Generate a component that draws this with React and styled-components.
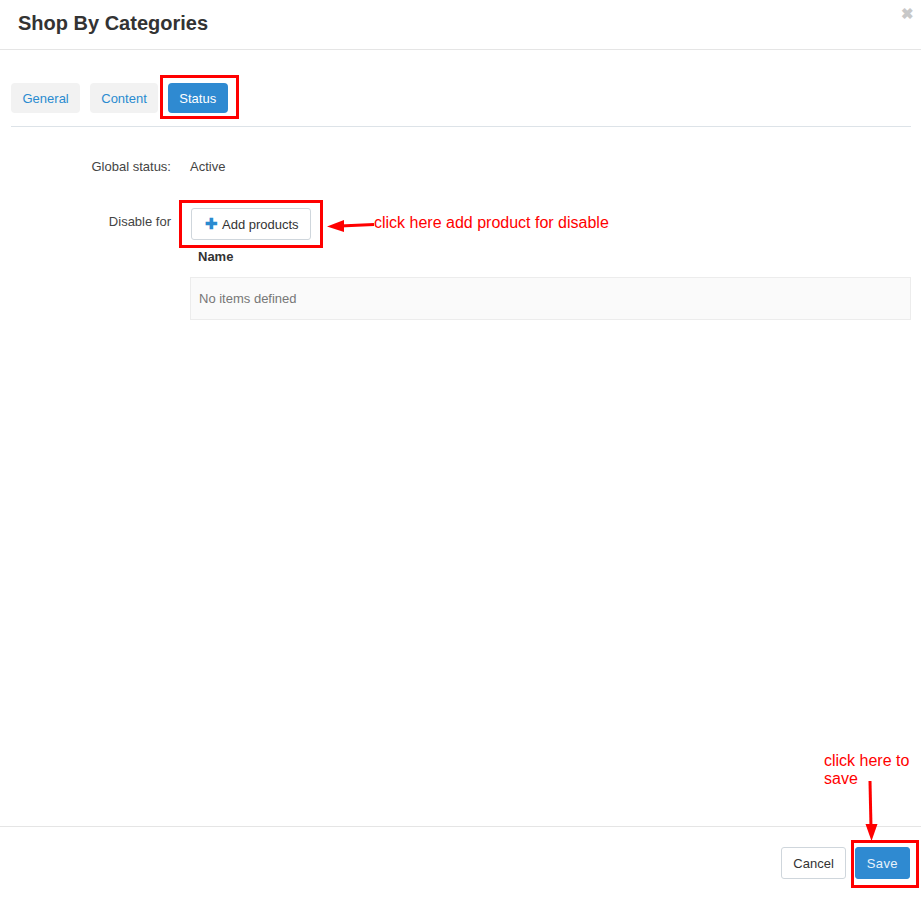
import React from 'react';
import styled, { createGlobalStyle } from 'styled-components';

const GlobalStyle = createGlobalStyle`
  html, body {
    margin: 0;
    padding: 0;
    background: #fff;
  }
  body {
    font-family: "Liberation Sans", Arial, sans-serif;
    font-size: 13px;
    color: #333;
  }
  * {
    box-sizing: border-box;
  }
`;

const Modal = styled.div`
  position: relative;
  width: 921px;
  height: 898px;
  display: flex;
  flex-direction: column;
  background: #fff;
`;

const Header = styled.div`
  height: 50px;
  border-bottom: 1px solid #e5e5e5;
  display: flex;
  align-items: center;
  padding: 0 18px;
`;

const Title = styled.h1`
  margin: 0;
  font-size: 20px;
  font-weight: bold;
  color: #333;
  margin-top: -2px;
`;

const Close = styled.span`
  position: absolute;
  top: 5px;
  right: 7px;
  font-size: 15px;
  color: #c8c8c8;
  font-weight: bold;
  cursor: pointer;
`;

const Body = styled.div`
  flex: 1;
  padding: 33px 10px 0 11px;
`;

const Tabs = styled.div`
  display: flex;
  gap: 9.5px;
  padding-bottom: 13px;
  border-bottom: 1px solid #dde3e8;
`;

const Tab = styled.button`
  height: 30px;
  padding: 0 11.5px;
  border: none;
  border-radius: 4px;
  font-family: inherit;
  font-size: 13px;
  background: ${p => (p.active ? '#2f8ad1' : '#f2f2f2')};
  color: ${p => (p.active ? '#fff' : '#2a8bd0')};
  cursor: pointer;
`;

const Form = styled.div`
  padding-top: 26px;
  display: flex;
  flex-direction: column;
  gap: 27px;
`;

const Row = styled.div`
  display: grid;
  grid-template-columns: 160px 1fr;
  column-gap: 19px;
`;

const Label = styled.div`
  text-align: right;
  color: #444;
  line-height: 28px;
`;

const Value = styled.div`
  color: #444;
  line-height: 28px;
`;

const AddButton = styled.button`
  display: inline-flex;
  align-items: center;
  gap: 4px;
  height: 32px;
  margin-left: 1px;
  padding: 0 11px 0 13px;
  background: #fff;
  border: 1px solid #cfd6dc;
  border-radius: 3px;
  font-family: inherit;
  font-size: 13px;
  color: #333;
  cursor: pointer;
`;

const Plus = styled.span`
  color: #2a8bd0;
  font-weight: bold;
  font-size: 15px;
  line-height: 1;
  margin-top: -2px;
`;

const Table = styled.div`
  margin-top: 5px;
`;

const HeadCell = styled.div`
  font-weight: bold;
  color: #333;
  padding: 0 8px;
  height: 32px;
  line-height: 24px;
`;

const EmptyRow = styled.div`
  height: 43px;
  background: #fafafa;
  border: 1px solid #ececec;
  display: flex;
  align-items: center;
  padding: 0 8px;
  color: #777;
  font-size: 13px;
`;

const Footer = styled.div`
  height: 72px;
  border-top: 1px solid #e5e5e5;
  display: flex;
  justify-content: flex-end;
  align-items: flex-start;
  gap: 9px;
  padding: 20px 11px 0 0;
`;

const FooterButton = styled.button`
  height: 32px;
  padding: 0 11px;
  border-radius: 3px;
  font-family: inherit;
  font-size: 13px;
  border: 1px solid ${p => (p.primary ? '#2f8ad1' : '#cfd6dc')};
  background: ${p => (p.primary ? '#2f8ad1' : '#fff')};
  color: ${p => (p.primary ? '#e8f2fb' : '#333')};
  letter-spacing: ${p => (p.primary ? '0.4px' : '0')};
  cursor: pointer;
`;

const Mark = styled.div`
  position: absolute;
  border: 3px solid #ff0000;
`;

const Note = styled.div`
  position: absolute;
  color: #ff0000;
  font-size: 16px;
  line-height: 18px;
  font-family: "Liberation Sans", Arial, sans-serif;
`;

const Arrows = styled.svg`
  position: absolute;
  left: 0;
  top: 0;
  pointer-events: none;
`;

export default function App() {
  return (
    <>
      <GlobalStyle />
      <Modal>
        <Header>
          <Title>Shop By Categories</Title>
        </Header>
        <Close>✖</Close>
        <Body>
          <Tabs>
            <Tab>General</Tab>
            <Tab>Content</Tab>
            <Tab active>Status</Tab>
          </Tabs>
          <Form>
            <Row>
              <Label>Global status:</Label>
              <Value>Active</Value>
            </Row>
            <Row>
              <Label>Disable for</Label>
              <div>
                <AddButton>
                  <Plus>✚</Plus> Add products
                </AddButton>
                <Table>
                  <HeadCell>Name</HeadCell>
                  <EmptyRow>No items defined</EmptyRow>
                </Table>
              </div>
            </Row>
          </Form>
        </Body>
        <Footer>
          <FooterButton>Cancel</FooterButton>
          <FooterButton primary>Save</FooterButton>
        </Footer>

        <Mark style={{ left: 160, top: 75, width: 79, height: 44 }} />
        <Mark style={{ left: 179, top: 200, width: 144, height: 48 }} />
        <Mark style={{ left: 851, top: 840, width: 68, height: 48 }} />
        <Note style={{ left: 374, top: 214 }}>click here add product for disable</Note>
        <Note style={{ left: 824, top: 752 }}>click here to<br />save</Note>
        <Arrows width="921" height="898">
          <line x1="374" y1="224.5" x2="340" y2="226" stroke="#ff0000" strokeWidth="3" />
          <polygon points="327,226.5 344,220 344,232" fill="#ff0000" />
          <line x1="870" y1="781" x2="871" y2="828" stroke="#ff0000" strokeWidth="3" />
          <polygon points="871.5,841 865.5,824 877.5,824" fill="#ff0000" />
        </Arrows>
      </Modal>
    </>
  );
}
